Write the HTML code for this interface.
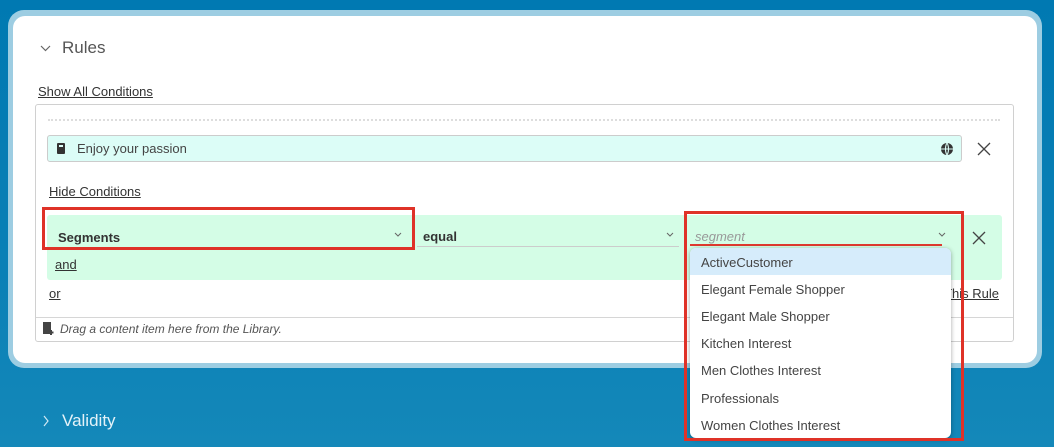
<!DOCTYPE html>
<html><head><meta charset="utf-8"><style>
*{box-sizing:border-box;margin:0;padding:0}
body{width:1054px;height:447px;overflow:hidden;position:relative;font-family:"Liberation Sans",sans-serif;background:linear-gradient(180deg,#0079b2 0%,#0a80b6 60%,#1488b9 100%);color:#333}
.abs{position:absolute}
.card{left:8px;top:10px;width:1034px;height:358px;background:#9dcde2;border-radius:16px}
.inner{left:13px;top:16px;width:1024px;height:347px;background:#fff;border-radius:12px}
u{text-decoration:underline}
.t13{font-size:13px}
.dd div{height:27px;line-height:29px;padding-left:11px}
</style></head><body>
<div class="abs card"></div>
<div class="abs inner"></div>
<svg class="abs" style="left:40px;top:44px" width="12" height="10"><path d="M1 2 L5.5 6.5 L10 2" fill="none" stroke="#666" stroke-width="1.2"/></svg>
<div class="abs" style="left:62px;top:38px;font-size:17px;color:#555">Rules</div>
<div class="abs t13" style="left:38px;top:84px;color:#333"><u>Show All Conditions</u></div>
<div class="abs" style="left:35px;top:104px;width:979px;height:238px;border:1px solid #d0d0d0;border-radius:3px;background:#fff"></div>
<div class="abs" style="left:48px;top:119px;width:952px;height:0;border-top:2px dotted #ddd"></div>
<div class="abs" style="left:47px;top:135px;width:915px;height:27px;background:#dcfdf7;border:1px solid #ccc;border-radius:3px"></div>
<div class="abs" style="left:57px;top:143px;width:8px;height:11px;background:#333;border-radius:1px"></div>
<div class="abs" style="left:59px;top:145px;width:4px;height:2px;background:#dcfdf7"></div>
<div class="abs t13" style="left:77px;top:141px;color:#444">Enjoy your passion</div>
<svg class="abs" style="left:940px;top:142px" width="14" height="14"><circle cx="7" cy="7" r="6" fill="#333"/><path d="M1 7H13M7 1C5 4 5 10 7 13M7 1C9 4 9 10 7 13" stroke="#dcfdf7" stroke-width="1.1" fill="none"/></svg>
<svg class="abs" style="left:977px;top:142px" width="14" height="14"><path d="M1 1L13 13M13 1L1 13" stroke="#444" stroke-width="1.3"/></svg>
<div class="abs t13" style="left:49px;top:184px"><u>Hide Conditions</u></div>
<div class="abs" style="left:47px;top:215px;width:955px;height:65px;background:#d4fde6;border-radius:3px"></div>
<div class="abs t13" style="left:58px;top:230px;font-weight:bold;color:#333">Segments</div>
<svg class="abs" style="left:394px;top:232px" width="8" height="6"><path d="M1 1L4 4L7 1" stroke="#666" fill="none"/></svg>
<div class="abs t13" style="left:423px;top:229px;font-weight:bold;color:#333">equal</div>
<div class="abs" style="left:417px;top:246px;width:262px;height:1px;background:#ccc"></div>
<svg class="abs" style="left:666px;top:232px" width="8" height="6"><path d="M1 1L4 4L7 1" stroke="#666" fill="none"/></svg>
<div class="abs t13" style="left:695px;top:229px;font-style:italic;color:#999">segment</div>
<svg class="abs" style="left:938px;top:232px" width="8" height="6"><path d="M1 1L4 4L7 1" stroke="#666" fill="none"/></svg>
<div class="abs" style="left:690px;top:244px;width:252px;height:2px;background:#e03a2f"></div>
<svg class="abs" style="left:972px;top:231px" width="14" height="14"><path d="M1 1L13 13M13 1L1 13" stroke="#444" stroke-width="1.3"/></svg>
<div class="abs t13" style="left:55px;top:257px"><u>and</u></div>
<div class="abs t13" style="left:49px;top:286px"><u>or</u></div>
<div class="abs t13" style="left:880px;top:286px;width:119px;text-align:right"><u>Delete This Rule</u></div>
<div class="abs" style="left:36px;top:317px;width:977px;height:1px;background:#d6d6d6"></div>
<svg class="abs" style="left:42px;top:322px" width="13" height="14"><rect x="1" y="0" width="8" height="12" fill="#444"/><path d="M9 8V13M6.5 10.5H11.5" stroke="#444" stroke-width="2"/></svg>
<div class="abs" style="left:60px;top:322px;font-size:12px;font-style:italic;color:#555">Drag a content item here from the Library.</div>
<div class="abs" style="left:42px;top:207px;width:373px;height:43px;border:3px solid #df3228"></div>
<div class="abs dd" style="left:690px;top:248px;width:261px;height:190px;background:#fff;border-radius:6px;box-shadow:0 1px 5px rgba(0,0,0,.35);overflow:hidden;font-size:13px;color:#444">
<div style="background:#d6ecfb">ActiveCustomer</div>
<div>Elegant Female Shopper</div>
<div>Elegant Male Shopper</div>
<div>Kitchen Interest</div>
<div style="height:28px;line-height:30px">Men Clothes Interest</div>
<div>Professionals</div>
<div>Women Clothes Interest</div>
</div>
<div class="abs" style="left:684px;top:211px;width:280px;height:230px;border:3px solid #df3228"></div>
<svg class="abs" style="left:42px;top:415px" width="8" height="12"><path d="M2 1L6 6L2 11" stroke="#d0e8f3" fill="none" stroke-width="1.2"/></svg>
<div class="abs" style="left:62px;top:411px;font-size:17px;color:#e4f2f8">Validity</div>
</body></html>
